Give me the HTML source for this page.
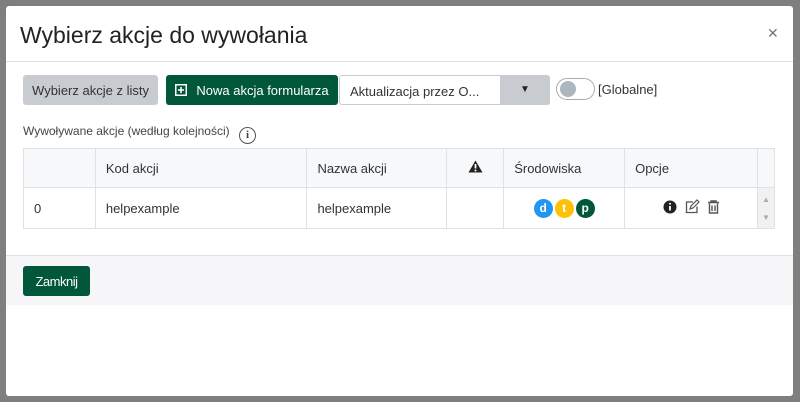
<!DOCTYPE html>
<html><head><style>
*{box-sizing:border-box;margin:0;padding:0}
body{width:800px;height:402px;background:#7f7f7f;font-family:"Liberation Sans",sans-serif;position:relative;overflow:hidden;color:#212529}
.m{position:absolute;left:6px;top:6px;width:787px;height:390px;background:#fff;border-radius:3px}
.a{position:absolute}
.h{left:14px;top:16px;font-size:23px;color:#222}
.x{left:761px;top:19px;font-size:14px;color:#777}
.hl{left:0;top:55px;width:787px;height:1px;background:#dee2e6}
.btn{position:absolute;font-size:13px;border-radius:3px;display:flex;align-items:center;justify-content:center}
td,th{border:1px solid #dee2e6;font-size:13px;font-weight:normal;text-align:left;padding:0 10px;color:#333}
table{border-collapse:collapse;position:absolute;left:17px;top:142px}
.c{display:inline-block;width:19px;height:19px;border-radius:50%;color:#fff;font-weight:bold;font-size:12px;text-align:center;line-height:19px;margin:0 1px}
</style></head><body>
<div class="m">
<div class="a h">Wybierz akcje do wywołania</div>
<div class="a x">✕</div>
<div class="a hl"></div>
<div class="btn" style="left:17px;top:69px;width:135px;height:30px;background:#c8ccd1;color:#333">Wybierz akcje z listy</div>
<div class="btn" style="left:160px;top:69px;width:172px;height:30px;background:#00573a;color:#fff"><svg width="12" height="12" viewBox="0 0 12 12" style="margin-right:9px"><rect x="0.75" y="0.75" width="10.5" height="10.5" fill="none" stroke="#fff" stroke-width="1.5"/><path d="M6 3v6M3 6h6" stroke="#fff" stroke-width="1.6"/></svg>Nowa akcja formularza</div>
<div class="a" style="left:333px;top:69px;width:211px;height:30px;border:1px solid #c8ccd1;border-radius:3px;font-size:13px;color:#333;padding:8px 10px">Aktualizacja przez O...</div>
<div class="a" style="left:494px;top:69px;width:50px;height:30px;background:#c8ccd1;border-radius:0 3px 3px 0;text-align:center;font-size:10px;line-height:30px;color:#222">▼</div>
<div class="a" style="left:550px;top:72px;width:39px;height:22px;border:1px solid #aaa;border-radius:11px"><div style="position:absolute;left:3px;top:2px;width:16px;height:16px;border-radius:50%;background:#adb5bd"></div></div>
<div class="a" style="left:592px;top:76px;font-size:13px;color:#333">[Globalne]</div>
<div class="a" style="left:17px;top:118px;font-size:12px;color:#444">Wywoływane akcje (według kolejności) <span style="display:inline-block;width:17px;height:17px;border:1.5px solid #555;border-radius:50%;text-align:center;font-size:11px;line-height:14px;font-weight:bold;margin-left:6px;font-family:'Liberation Serif',serif;vertical-align:-3px">i</span></div>
<table style="width:752px">
<tr style="height:39px;background:#f7f8fa"><th style="width:72px"></th><th style="width:212px">Kod akcji</th><th style="width:140px">Nazwa akcji</th><th style="width:57px;text-align:center"><svg width="15" height="13" viewBox="0 0 15 13"><path d="M7.5 0.5L14.5 12.5H0.5Z" fill="#222"/><path d="M7.5 4v4.5" stroke="#fff" stroke-width="1.8"/><circle cx="7.5" cy="10.5" r="1" fill="#fff"/></svg></th><th style="width:121px">Środowiska</th><th style="width:133px">Opcje</th><th style="width:17px;padding:0"></th></tr>
<tr style="height:41px"><td>0</td><td>helpexample</td><td>helpexample</td><td></td><td style="text-align:center"><span class="c" style="background:#2196f3">d</span><span class="c" style="background:#ffc107">t</span><span class="c" style="background:#00573a">p</span></td><td style="text-align:center"><svg width="80" height="16" viewBox="0 0 80 16"><circle cx="19" cy="8" r="6.5" fill="#222"/><path d="M19 7v4.5" stroke="#fff" stroke-width="1.8"/><circle cx="19" cy="4.8" r="1" fill="#fff"/><path d="M42 3h-6.5v10.5h10.5v-6" fill="none" stroke="#555" stroke-width="1.3"/><path d="M39 10l1-3 6-6 2 2-6 6z" fill="none" stroke="#555" stroke-width="1.2"/><path d="M57 3.5h11M60 3.5v-1.5h5v1.5M58.5 4.5v9.5h8v-9.5M61 6.5v5.5M64 6.5v5.5" fill="none" stroke="#555" stroke-width="1.4"/></svg></td><td style="padding:0;background:#f1f1f1;font-size:8px;color:#aaa;text-align:center">▲<br><br>▼</td></tr>
</table>
<div class="a" style="left:0;top:249px;width:787px;height:50px;background:#f6f6f8;border-top:1px solid #dee2e6"></div>
<div class="btn" style="left:17px;top:260px;width:67px;height:30px;background:#00573a;color:#fff;font-size:13px;letter-spacing:-0.5px">Zamknij</div>
</div>
</body></html>
